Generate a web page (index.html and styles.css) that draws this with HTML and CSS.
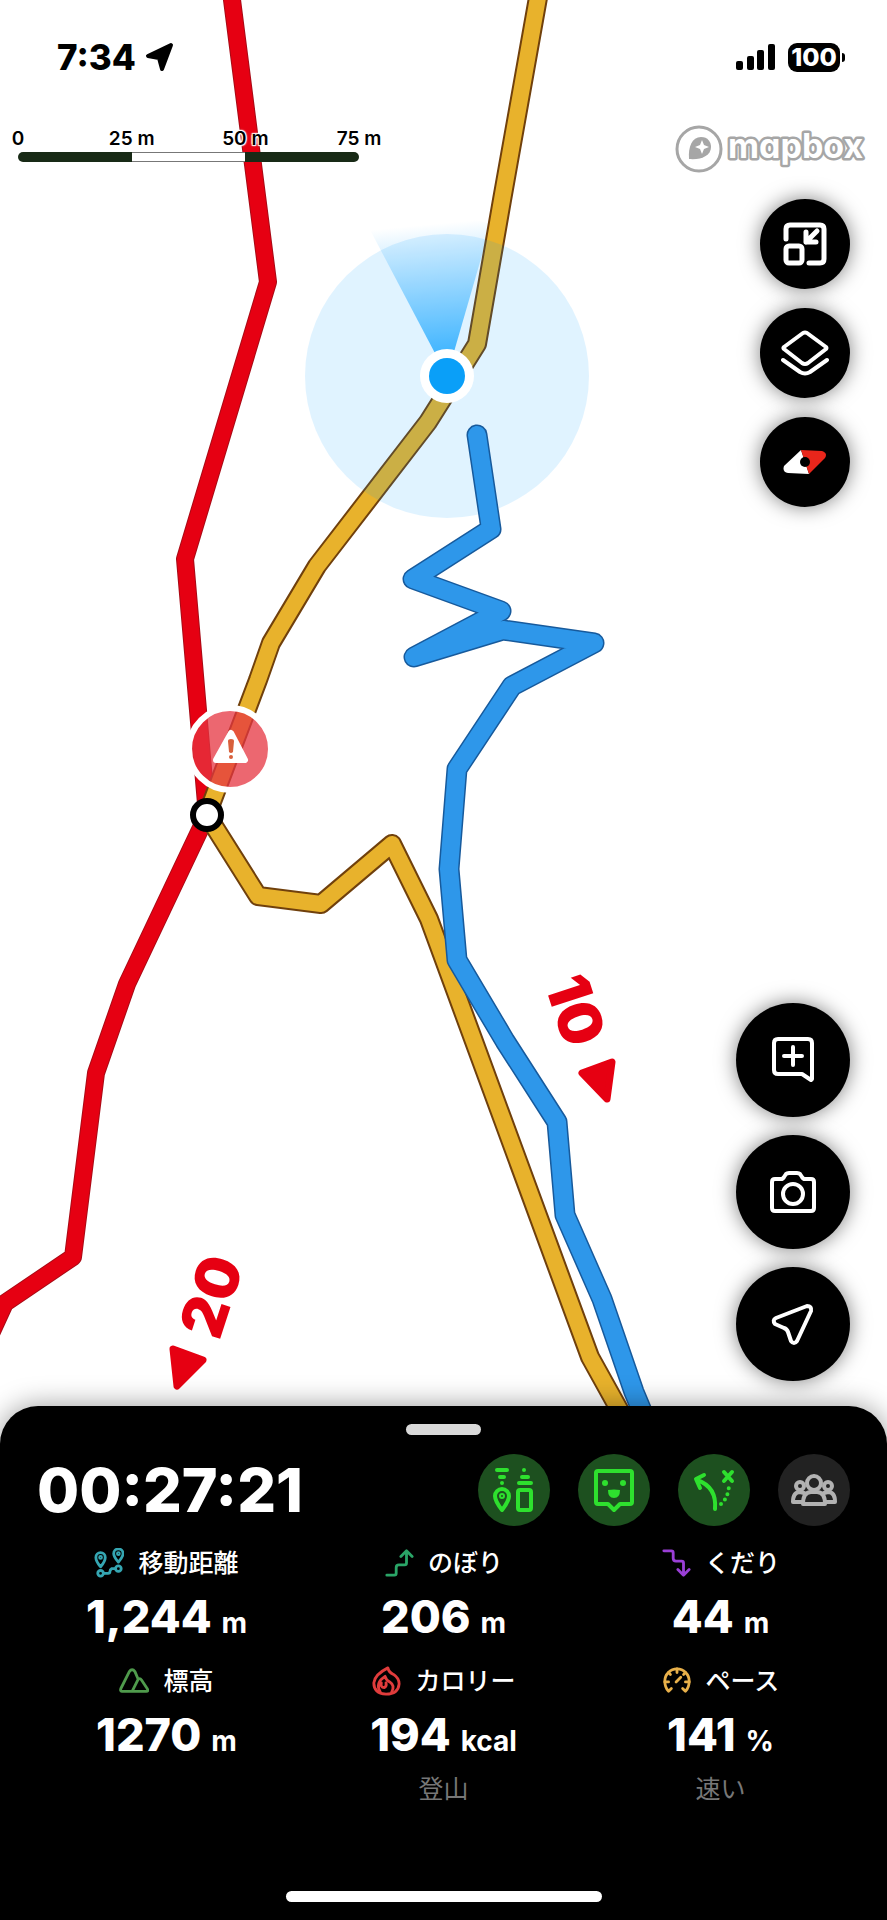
FILE: index.html
```html
<!DOCTYPE html>
<html lang="ja">

<head>
    <meta charset="UTF-8">
    <meta name="viewport" content="width=device-width, initial-scale=1">
    <title>活動記録</title>
    <link rel="stylesheet" href="styles.css">
</head>

<body>
    <svg class="kort" viewBox="0 0 887 1450" preserveAspectRatio="xMidYMin slice" aria-hidden="true">
        <defs>
            <linearGradient id="beam" gradientUnits="userSpaceOnUse" x1="446" y1="352" x2="434" y2="224">
                <stop offset="0" stop-color="#4dbaff" />
                <stop offset="1" stop-color="#4dbaff" stop-opacity="0" />
            </linearGradient>
        </defs>

        <!-- routes -->
        <path class="rute red-edge" d="M231 -8L268 282L185 559L207 815L127 984L96 1073L73 1257L5 1303L-12 1340" />
        <path class="rute red" d="M231 -8L268 282L185 559L207 815L127 984L96 1073L73 1257L5 1303L-12 1340" />

        <path class="beam" d="M447 376L367 224Q428 205 491 224Z" />

        <path class="rute yellow-edge" d="M539 -8L502 200L477 344L440 403L428 422L317 566L271 643L258 680L207 815L258 896L321 904L392 844L429 919L590 1357L636 1440" />
        <path class="rute yellow" d="M539 -8L502 200L477 344L440 403L428 422L317 566L271 643L258 680L207 815L258 896L321 904L392 844L429 919L590 1357L636 1440" />

        <!-- position -->
        <circle class="accuracy" cx="447" cy="376" r="142" />
        <circle class="pos-ring" cx="447" cy="376" r="27" />
        <circle class="pos-dot" cx="447" cy="376" r="18" />

        <!-- own track -->
        <path class="rute track-edge" d="M477 435L491 529L413 579L501 611L414 657L503 630L594 643L512 686L457 769L449 869L457 960L505 1041L557 1122L565 1215L602 1299L634 1392L654 1440" />
        <path class="rute track" d="M477 435L491 529L413 579L501 611L414 657L503 630L594 643L512 686L457 769L449 869L457 960L505 1041L557 1122L565 1215L602 1299L634 1392L654 1440" />

        <!-- warning and junction -->
        <circle class="warn" cx="230" cy="749" r="41" />
        <path class="warn-sign" d="M231 733L245 760H216Z" />
        <path class="warn-mark" d="M228 741q0-2 3-2t3 2l-1 11q-2 2-4 0z" />
        <circle class="warn-mark" cx="231" cy="757" r="2" />
        <circle class="junction" cx="207" cy="815" r="14" />

        <!-- course times -->
        <text class="time" transform="translate(576 1010) rotate(72)" dy="22">10</text>
        <path class="time-arrow" d="M582 1073L612 1062L607 1099Z" />
        <text class="time" transform="translate(211 1296) rotate(-72)" dy="22">20</text>
        <path class="time-arrow" d="M173 1349L203 1360L177 1386Z" />
    </svg>

    <header class="status">
        <div class="clock">
            <span>7:34</span>
            <svg width="30" height="30" viewBox="0 0 30 30" aria-hidden="true">
                <path d="M26 3L3 14L14 16L17 27Z" fill="#000" stroke="#000" stroke-width="4" stroke-linejoin="round" />
            </svg>
        </div>
        <div class="power">
            <svg width="40" height="28" viewBox="0 0 40 28" aria-hidden="true">
                <rect x="0" y="18" width="7" height="9" rx="2" />
                <rect x="11" y="13" width="7" height="14" rx="2" />
                <rect x="21" y="7" width="7" height="20" rx="2" />
                <rect x="32" y="1" width="7" height="26" rx="2" />
            </svg>
            <span class="battery">100</span>
        </div>
    </header>

    <main>
        <div class="scale">
            <ol class="scale-labels">
                <li>0</li>
                <li>25 m</li>
                <li>50 m</li>
                <li>75 m</li>
            </ol>
            <div class="scale-bar"><i></i><i></i><i></i></div>
        </div>

        <div class="tools">
            <svg class="mapbox" width="194" height="50" viewBox="0 0 194 50" role="img" aria-label="mapbox">
                <circle cx="24" cy="25" r="22" fill="#fff" stroke="#a6a6a6" stroke-width="3" />
                <path d="M14 35C13 23 17 13 26 13C33 13 36 18 36 23C36 32 26 36 14 35Z" fill="#a6a6a6" />
                <path d="M27 16L29 21L34 23L29 25L27 30L25 25L20 23L25 21Z" fill="#fff" />
                <text x="53" y="34">mapbox</text>
            </svg>

            <div class="knapper">
                <button type="button" aria-label="縮小表示">
                    <svg width="44" height="44" viewBox="0 0 44 44">
                        <path class="thick" d="M3 17V7Q3 3 7 3H37Q41 3 41 7V37Q41 41 37 41H26" />
                        <rect class="thick" x="3" y="24" width="16" height="17" rx="3" />
                        <path class="thick" d="M34 9L23 20M23 10V20H33" />
                    </svg>
                </button>
                <button type="button" aria-label="レイヤー">
                    <svg width="50" height="46" viewBox="0 0 50 46">
                        <path d="M23 3Q25 2 27 3L46 17Q47 18 46 19L28 33Q25 35 22 33L4 19Q3 18 4 17Z" />
                        <path d="M3 30L20 42Q25 45 30 42L47 30" />
                    </svg>
                </button>
                <button type="button" aria-label="コンパス">
                    <svg width="44" height="26" viewBox="0 0 44 26">
                        <path d="M18 1L26 25L5 24Q-1 23 1 17Z" fill="#fff" stroke="none" />
                        <path d="M18 1L39 2Q45 4 42 9L26 25Z" fill="#e9261b" stroke="none" />
                        <circle cx="22" cy="13" r="5" fill="#000" stroke="none" />
                    </svg>
                </button>
            </div>

            <div class="knapper store">
                <button type="button" aria-label="地点を追加">
                    <svg width="46" height="48" viewBox="0 0 46 48">
                        <path d="M42 43V7Q42 3 38 3H8Q4 3 4 7V34Q4 38 8 38H32L41 44Z" />
                        <path d="M23 11V29M14 20H32" />
                    </svg>
                </button>
                <button type="button" aria-label="写真を撮る">
                    <svg width="48" height="44" viewBox="0 0 48 44">
                        <path d="M6 9H12Q14 9 15 7L17 4Q18 3 20 3H28Q30 3 31 4L33 7Q34 9 36 9H42Q45 9 45 12V38Q45 41 42 41H6Q3 41 3 38V12Q3 9 6 9Z" />
                        <circle cx="24" cy="24" r="10" />
                    </svg>
                </button>
                <button type="button" aria-label="現在地">
                    <svg width="44" height="44" viewBox="0 0 44 44">
                        <path d="M36 4L5 16Q1 18 4 22L13 26Q16 27 17 30L20 39Q23 43 26 39L40 9Q41 4 36 4Z" />
                    </svg>
                </button>
            </div>
        </div>
    </main>

    <section class="panel">
        <div class="greb"></div>
        <div class="top">
            <h1>00:27:21</h1>
            <nav>
                <button type="button" class="valgt" aria-label="機器の状態">
                    <svg width="44" height="48" viewBox="0 0 44 48">
                        <path d="M5 4H15M8 11H12M10 17H10M32 4H32M30 11H36M27 17H39" />
                        <path d="M10 44Q3 35 3 30A7 7 0 0 1 17 30Q17 35 10 44Z" />
                        <circle cx="10" cy="30" r="1" />
                        <rect x="26" y="24" width="13" height="20" rx="2" />
                    </svg>
                </button>
                <button type="button" class="valgt" aria-label="みまもり">
                    <svg width="44" height="46" viewBox="0 0 44 46">
                        <path d="M6 4H38Q40 4 40 6V35Q40 37 38 37H28L22 43L16 37H6Q4 37 4 35V6Q4 4 6 4Z" />
                        <path class="fyld" d="M16 23Q22 22 28 23Q28 31 22 31Q16 31 16 23Z" />
                        <circle class="fyld" cx="13" cy="16" r="3" />
                        <circle class="fyld" cx="31" cy="16" r="3" />
                    </svg>
                </button>
                <button type="button" class="valgt" aria-label="ルート外れ警告">
                    <svg width="44" height="46" viewBox="0 0 44 46">
                        <path d="M23 42Q25 20 5 13M8 21L4 12L12 8" />
                        <path d="M32 5L40 14M40 5L32 14" />
                        <path class="prikker" d="M29 37Q36 31 37 19" />
                    </svg>
                </button>
                <button type="button" aria-label="グループ">
                    <svg width="46" height="36" viewBox="0 0 46 36">
                        <circle cx="23" cy="11" r="7" />
                        <circle cx="9" cy="14" r="4" />
                        <circle cx="37" cy="14" r="4" />
                        <path d="M12 32Q12 20 20 20H26Q34 20 34 32Z" />
                        <path d="M12 30H2Q2 20 9 20L13 21M34 30H44Q44 20 37 20L33 21" />
                    </svg>
                </button>
            </nav>
        </div>

        <dl>
            <div class="maal">
                <dt>
                    <svg class="cyan" viewBox="0 0 32 32" aria-hidden="true">
                        <path d="M7 20Q2 14 2 10A5 5 0 0 1 12 10Q12 14 7 20ZM26 15Q21 9 21 6A5 5 0 0 1 31 6Q31 9 26 15Z" />
                        <circle cx="7" cy="10" r="1" />
                        <circle cx="26" cy="6" r="1" />
                        <circle cx="7" cy="27" r="3" />
                        <circle cx="26" cy="22" r="3" />
                        <path d="M10 27H15Q17 27 17 25T19 22H23" />
                    </svg>
                    移動距離
                </dt>
                <dd>1,244 <small>m</small></dd>
            </div>
            <div class="maal">
                <dt>
                    <svg class="green" viewBox="0 0 32 32" aria-hidden="true">
                        <path d="M3 29H11Q13 29 13 27V21Q13 18 16 18H22Q24 18 24 16V3M18 9L24 3L30 9" />
                    </svg>
                    のぼり
                </dt>
                <dd>206 <small>m</small></dd>
            </div>
            <div class="maal">
                <dt>
                    <svg class="purple" viewBox="0 0 32 32" aria-hidden="true">
                        <path d="M3 3H11Q13 3 13 5V11Q13 14 16 14H22Q24 14 24 16V29M18 23L24 29L30 23" />
                    </svg>
                    くだり
                </dt>
                <dd>44 <small>m</small></dd>
            </div>
            <div class="maal">
                <dt>
                    <svg class="leaf" viewBox="0 0 32 32" aria-hidden="true">
                        <path d="M3 27Q1 27 2 24L11 6Q14 2 17 6L20 13M14 27L20 15Q22 12 24 15L30 24Q32 27 29 27H3" />
                    </svg>
                    標高
                </dt>
                <dd>1270 <small>m</small></dd>
            </div>
            <div class="maal">
                <dt>
                    <svg class="red-icon" viewBox="0 0 32 32" aria-hidden="true">
                        <path d="M18 2Q19 7 24 9Q30 13 30 19Q29 30 16 30Q3 29 3 18Q4 9 18 2Z" />
                        <path d="M10 28Q4 18 15 11Q16 15 20 17Q26 21 22 28M16 18Q17 22 14 23Q10 23 11 18" />
                    </svg>
                    カロリー
                </dt>
                <dd>194 <small>kcal</small></dd>
                <dd class="note">登山</dd>
            </div>
            <div class="maal">
                <dt>
                    <svg class="gold" viewBox="0 0 32 32" aria-hidden="true">
                        <path d="M7 27Q3 23 3 16A13 13 0 0 1 29 16Q29 23 25 27L22 24M7 27L10 24" />
                        <path d="M16 3V7M7 7L9 9M25 7L23 9M3 17H7M29 17H25M15 17L20 12" />
                    </svg>
                    ペース
                </dt>
                <dd>141 <small>%</small></dd>
                <dd class="note">速い</dd>
            </div>
        </dl>
        <div class="home"></div>
    </section>
</body>

</html>
```
FILE: styles.css
```css
* {
    box-sizing: border-box;
}

body {
    position: relative;
    display: flex;
    flex-direction: column;
    min-height: 100vh;
    margin: 0;
    overflow-x: hidden;
    background-color: #fff;
    color: #000;
    font-family: Inter, "Noto Sans CJK JP", sans-serif;
}

button {
    display: flex;
    justify-content: center;
    align-items: center;
    padding: 0;
    border: none;
    border-radius: 50%;
    cursor: pointer;
}

button svg,
dt svg {
    fill: none;
    stroke: currentColor;
    stroke-width: 4px;
    stroke-linecap: round;
    stroke-linejoin: round;
}

/* map */
.kort {
    position: absolute;
    top: 0;
    left: 0;
    z-index: -1;
    width: 100%;
    height: 1450px;
}

.rute {
    fill: none;
    stroke-linejoin: round;
    stroke-linecap: round;
}

.red-edge {
    stroke: #a80a16;
    stroke-width: 18px;
}

.red {
    stroke: #e60012;
    stroke-width: 16px;
}

.yellow-edge {
    stroke: #70400c;
    stroke-width: 20px;
}

.yellow {
    stroke: #e8b22c;
    stroke-width: 16px;
}

.track-edge {
    stroke: #175a9c;
    stroke-width: 21px;
}

.track {
    stroke: #2e97ea;
    stroke-width: 18px;
}

.beam {
    fill: url(#beam);
}

.accuracy {
    fill: #00a0ff;
    fill-opacity: 0.12;
}

.pos-ring,
.warn-sign {
    fill: #fff;
}

.pos-dot {
    fill: #0a9ff8;
}

.warn {
    fill: #e53440;
    fill-opacity: 0.75;
    stroke: #fff;
    stroke-width: 6px;
}

.warn-sign {
    stroke: #fff;
    stroke-width: 6px;
    stroke-linejoin: round;
}

.warn-mark {
    fill: #d8603c;
}

.junction {
    fill: #fff;
    stroke: #000;
    stroke-width: 6px;
}

.time {
    fill: #e60012;
    font-size: 60px;
    font-weight: 900;
    text-anchor: middle;
}

.time-arrow {
    fill: #e60012;
    stroke: #e60012;
    stroke-width: 7px;
    stroke-linejoin: round;
}

/* status bar */
.status,
.clock,
.power {
    display: flex;
    align-items: center;
}

.status {
    justify-content: space-between;
    padding: 37px 47px 0 57px;
}

.clock {
    gap: 9px;
    font-size: 35px;
    font-weight: 800;
    line-height: 40px;
}

.power {
    gap: 12px;
}

.battery {
    position: relative;
    width: 52px;
    border-radius: 9px;
    background-color: #000;
    color: #fff;
    font-size: 25px;
    font-weight: 800;
    line-height: 29px;
    text-align: center;
}

.battery::after {
    content: "";
    position: absolute;
    top: 10px;
    right: -5px;
    width: 3px;
    height: 9px;
    border-radius: 0 4px 4px 0;
    background-color: #000;
}

/* map controls */
main {
    flex: 1;
    display: flex;
    justify-content: space-between;
    padding: 47px 18px 25px;
}

.scale {
    width: 341px;
    padding-top: 5px;
}

.scale-labels {
    display: flex;
    justify-content: space-between;
    margin: 0 0 3px;
    padding: 0;
    list-style: none;
    font-size: 19px;
    font-weight: 600;
    line-height: 20px;
    text-shadow: 1px 1px 1px #fff, -1px 1px 1px #fff, 1px -1px 1px #fff, -1px -1px 1px #fff, 0 0 3px #fff;
}

.scale-labels li {
    display: flex;
    justify-content: center;
    width: 0;
    white-space: nowrap;
}

.scale-bar {
    display: flex;
    height: 10px;
    border-radius: 5px;
    overflow: hidden;
}

.scale-bar i {
    flex: 1;
    background-color: #182a16;
}

.scale-bar i:nth-child(2) {
    border: solid #777;
    border-width: 1px 0;
    background-color: #fff;
}

.tools {
    display: flex;
    flex-direction: column;
    align-items: flex-end;
}

.mapbox text {
    fill: #fff;
    stroke: #a6a6a6;
    stroke-width: 5px;
    stroke-linejoin: round;
    paint-order: stroke;
    font-size: 34px;
    font-weight: 700;
    font-feature-settings: "cv11";
}

.knapper {
    display: flex;
    flex-direction: column;
    gap: 19px;
    margin: 25px 19px 0;
}

.knapper button {
    width: 90px;
    height: 90px;
    background-color: #000;
    color: #fff;
    box-shadow: 0 0 20px rgba(0, 0, 0, 0.5);
}

.knapper .thick {
    stroke-width: 5px;
}

.knapper.store {
    gap: 18px;
    margin-top: auto;
}

.store button {
    width: 114px;
    height: 114px;
}

/* panel */
.panel {
    padding: 18px 28px;
    border-radius: 38px 38px 0 0;
    background-color: #000;
    color: #fff;
    box-shadow: 0 0 28px rgba(0, 0, 0, 0.4);
}

.greb {
    width: 75px;
    height: 11px;
    margin: 0 auto 19px;
    border-radius: 6px;
    background-color: #d9d9d9;
}

.top {
    display: flex;
    justify-content: space-between;
    align-items: center;
    padding: 0 9px;
}

h1 {
    margin: 0;
    font-size: 61px;
    font-weight: 800;
    line-height: 72px;
}

nav {
    display: flex;
    gap: 28px;
}

nav button {
    width: 72px;
    height: 72px;
    background-color: #222;
    color: #b2b2b2;
}

nav .valgt {
    background-color: #1d501f;
    color: #2ee02e;
}

nav .fyld {
    fill: currentColor;
    stroke: none;
}

nav .prikker {
    stroke-dasharray: 0 6;
}

dl {
    display: grid;
    grid-template-columns: repeat(3, 1fr);
    row-gap: 24px;
    margin: 21px 0 86px;
}

.maal {
    display: flex;
    flex-direction: column;
    align-items: center;
    gap: 14px;
}

dt {
    display: flex;
    align-items: center;
    gap: 14px;
    font-size: 25px;
    font-weight: 500;
    line-height: 32px;
}

dt svg {
    width: 30px;
    height: 30px;
    stroke-width: 3px;
}

dd {
    margin: 0;
    font-size: 45px;
    font-weight: 800;
    line-height: 48px;
}

small {
    font-size: 28px;
    font-weight: 700;
    line-height: 1;
}

dd.note {
    color: #777;
    font-size: 25px;
    font-weight: 400;
    line-height: 32px;
}

.cyan {
    color: #35a6b2;
}

.green {
    color: #2aa567;
}

.purple {
    color: #9a3fd6;
}

.leaf {
    color: #4f9a4c;
}

.red-icon {
    color: #e03c3c;
}

.gold {
    color: #e8b04a;
}

.home {
    width: 316px;
    height: 11px;
    margin: 0 auto;
    border-radius: 6px;
    background-color: #fff;
}
```
